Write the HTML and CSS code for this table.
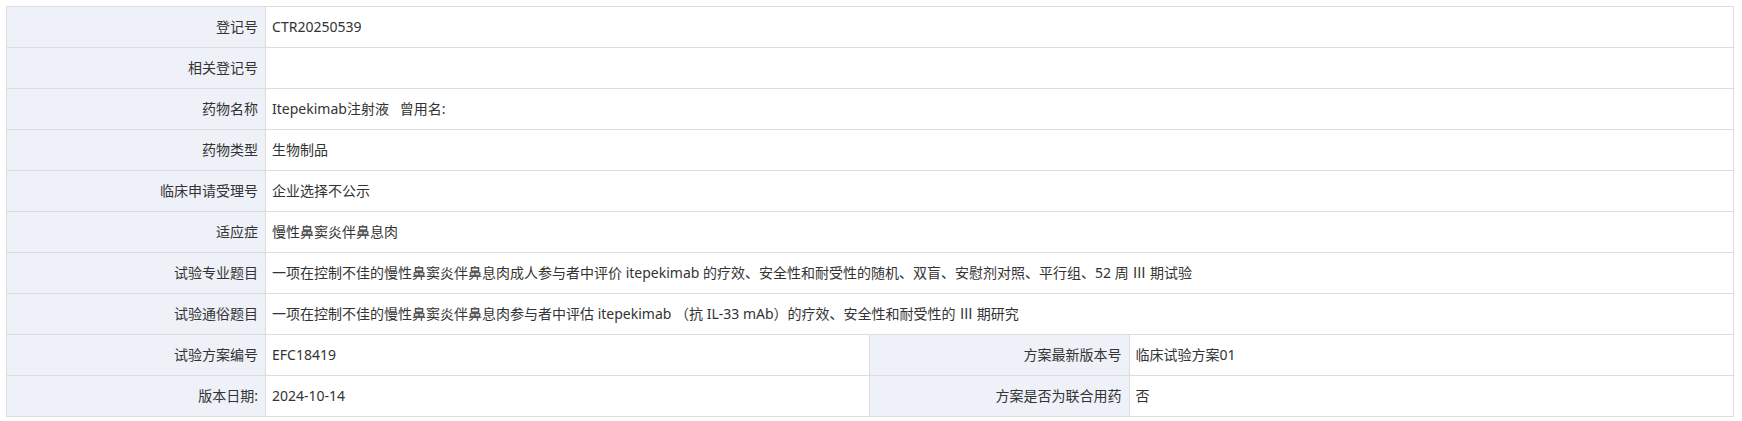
FILE: index.html
```html
<!DOCTYPE html>
<html lang="zh-CN">
<head>
<meta charset="utf-8">
<title>试验信息</title>
<link rel="stylesheet" href="styles.css">
</head>
<body>
<table class="info">
  <colgroup>
    <col class="c-label">
    <col class="c-value">
    <col class="c-label">
    <col class="c-value">
  </colgroup>
  <tbody>
    <tr><th>登记号</th><td colspan="3">CTR20250539</td></tr>
    <tr><th>相关登记号</th><td colspan="3"></td></tr>
    <tr><th>药物名称</th><td colspan="3">Itepekimab注射液&nbsp;&nbsp;&nbsp;曾用名:</td></tr>
    <tr><th>药物类型</th><td colspan="3">生物制品</td></tr>
    <tr><th>临床申请受理号</th><td colspan="3">企业选择不公示</td></tr>
    <tr><th>适应症</th><td colspan="3">慢性鼻窦炎伴鼻息肉</td></tr>
    <tr><th>试验专业题目</th><td colspan="3">一项在控制不佳的慢性鼻窦炎伴鼻息肉成人参与者中评价 itepekimab 的疗效、安全性和耐受性的随机、双盲、安慰剂对照、平行组、52 周 Ⅲ 期试验</td></tr>
    <tr><th>试验通俗题目</th><td colspan="3">一项在控制不佳的慢性鼻窦炎伴鼻息肉参与者中评估 itepekimab （抗 IL-33 mAb）的疗效、安全性和耐受性的 Ⅲ 期研究</td></tr>
    <tr><th>试验方案编号</th><td>EFC18419</td><th>方案最新版本号</th><td>临床试验方案01</td></tr>
    <tr><th>版本日期:</th><td>2024-10-14</td><th>方案是否为联合用药</th><td>否</td></tr>
  </tbody>
</table>
</body>
</html>
```

FILE: styles.css
```css
html, body {
  margin: 0;
  padding: 0;
  background: #ffffff;
}
body {
  padding: 6px;
  font-family: "Noto Sans", "Noto Sans CJK SC", sans-serif;
  font-size: 14px;
  color: #333333;
}
.info {
  width: 1728px;
  border-collapse: collapse;
  table-layout: fixed;
}
.c-label { width: 15%; }
.c-value { width: 35%; }
.info th,
.info td {
  border: 1px solid #dddddd;
  height: 40px;
  padding: 0 6px;
  vertical-align: middle;
  line-height: 20px;
  white-space: nowrap;
}
.info th {
  background: #eef1f8;
  font-weight: normal;
  text-align: right;
  padding-right: 7px;
}
.info td {
  text-align: left;
  background: #ffffff;
}
```
